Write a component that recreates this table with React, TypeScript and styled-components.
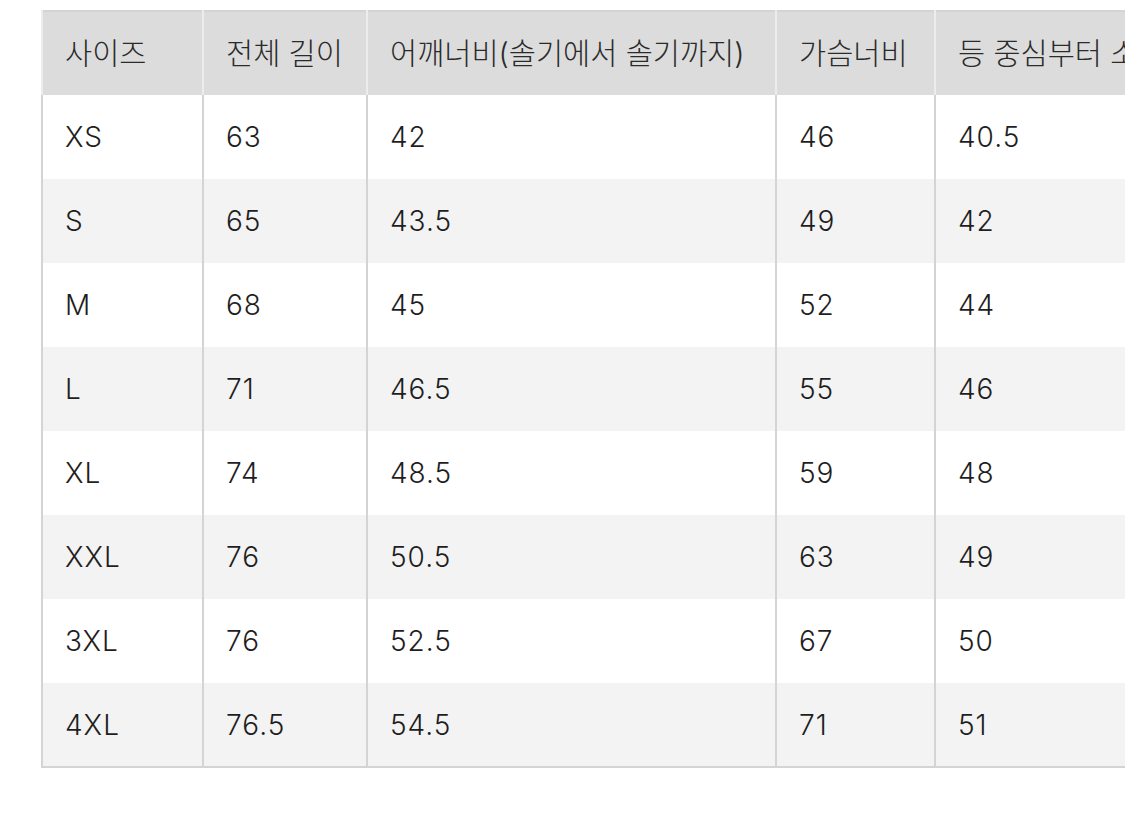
import React from 'react';
import styled, { createGlobalStyle } from 'styled-components';

const GlobalStyle = createGlobalStyle`
  html, body {
    margin: 0;
    padding: 0;
    background: #ffffff;
    overflow: hidden;
  }
  body {
    font-family: "Inter", "Noto Sans CJK KR", sans-serif;
    color: #222222;
  }
`;

const Page = styled.div`
  padding: 10px 0 0 41px;
  width: 1400px;
`;

const Table = styled.table`
  border-collapse: collapse;
  table-layout: fixed;
  width: 1300px;
  border: 2px solid #d4d4d4;
`;

const HeadCell = styled.th`
  height: 84px;
  padding: 0 0 6px 22px;
  text-align: left;
  font-size: 29.5px;
  font-weight: 300;
  background: #dcdcdc;
  color: #2a2a2a;
  white-space: nowrap;
  overflow: hidden;
  border-left: 2px solid #ececec;
  border-right: 2px solid #ececec;
  box-sizing: border-box;
`;

const Row = styled.tr<{ $shaded: boolean }>`
  background: ${(p) => (p.$shaded ? '#f3f3f3' : '#ffffff')};
`;

const Cell = styled.td`
  height: 84px;
  padding: 0 0 0 22px;
  text-align: left;
  font-size: 28px;
  font-weight: 300;
  letter-spacing: 1px;
  color: #1e1e1e;
  white-space: nowrap;
  border-left: 2px solid #d4d4d4;
  border-right: 2px solid #d4d4d4;
  box-sizing: border-box;
`;

const columns = [
  { title: '사이즈', width: 161 },
  { title: '전체 길이', width: 164 },
  { title: '어깨너비(솔기에서 솔기까지)', width: 409 },
  { title: '가슴너비', width: 159 },
  { title: '등 중심부터 소매 끝까지', width: 407 },
];

const rows = [
  ['XS', '63', '42', '46', '40.5'],
  ['S', '65', '43.5', '49', '42'],
  ['M', '68', '45', '52', '44'],
  ['L', '71', '46.5', '55', '46'],
  ['XL', '74', '48.5', '59', '48'],
  ['XXL', '76', '50.5', '63', '49'],
  ['3XL', '76', '52.5', '67', '50'],
  ['4XL', '76.5', '54.5', '71', '51'],
];

export default function App() {
  return (
    <>
      <GlobalStyle />
      <Page>
        <Table>
          <colgroup>
            {columns.map((c) => (
              <col key={c.title} style={{ width: c.width }} />
            ))}
          </colgroup>
          <thead>
            <tr>
              {columns.map((c) => (
                <HeadCell key={c.title}>{c.title}</HeadCell>
              ))}
            </tr>
          </thead>
          <tbody>
            {rows.map((r, i) => (
              <Row key={r[0]} $shaded={i % 2 === 1}>
                {r.map((v, j) => (
                  <Cell key={j}>{v}</Cell>
                ))}
              </Row>
            ))}
          </tbody>
        </Table>
      </Page>
    </>
  );
}
